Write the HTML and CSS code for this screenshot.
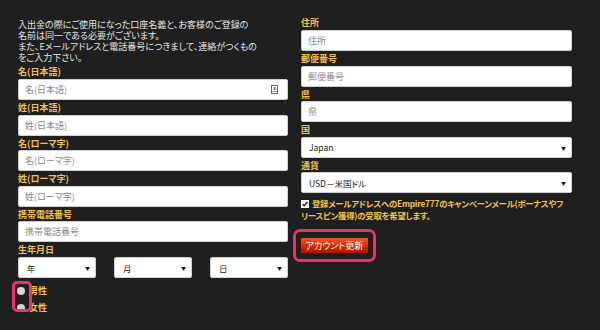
FILE: index.html
```html
<!DOCTYPE html>
<html lang="ja">
<head>
<meta charset="utf-8">
<link rel="stylesheet" href="styles.css">
</head>
<body>
<div class="page">
  <div class="col">
    <p class="intro">入出金の際にご使用になった口座名義と、お客様のご登録の<br>名前は同一である必要がございます。<br>また、Eメールアドレスと電話番号につきまして、連絡がつくもの<br>をご入力下さい。</p>
    <div class="field">
      <div class="label">名(日本語)</div>
      <div class="input">
        <span class="ph">名(日本語)</span>
        <svg class="card" width="7" height="9" viewBox="0 0 7 9"><rect x="0.5" y="0.5" width="6" height="8" fill="#fff" stroke="#666"/><rect x="2.5" y="2" width="2" height="3" fill="#777"/><line x1="1.5" y1="6.5" x2="5.5" y2="6.5" stroke="#888"/></svg>
      </div>
    </div>
    <div class="field">
      <div class="label">姓(日本語)</div>
      <div class="input"><span class="ph">姓(日本語)</span></div>
    </div>
    <div class="field">
      <div class="label">名(ローマ字)</div>
      <div class="input"><span class="ph">名(ローマ字)</span></div>
    </div>
    <div class="field">
      <div class="label">姓(ローマ字)</div>
      <div class="input"><span class="ph">姓(ローマ字)</span></div>
    </div>
    <div class="field">
      <div class="label">携帯電話番号</div>
      <div class="input"><span class="ph">携帯電話番号</span></div>
    </div>
    <div class="field">
      <div class="label">生年月日</div>
      <div class="dob">
        <div class="select small"><span>年</span><span class="arrow">▼</span></div>
        <div class="select small"><span>月</span><span class="arrow">▼</span></div>
        <div class="select small"><span>日</span><span class="arrow">▼</span></div>
      </div>
    </div>
    <div class="gender">
      <div class="radio-row"><span class="radio"></span><span class="rlabel">男性</span></div>
      <div class="radio-row"><span class="radio"></span><span class="rlabel">女性</span></div>
      <span class="mark mark-radio"></span>
    </div>
  </div>
  <div class="col right">
    <div class="field">
      <div class="label">住所</div>
      <div class="input"><span class="ph">住所</span></div>
    </div>
    <div class="field">
      <div class="label">郵便番号</div>
      <div class="input"><span class="ph">郵便番号</span></div>
    </div>
    <div class="field">
      <div class="label">県</div>
      <div class="input"><span class="ph">県</span></div>
    </div>
    <div class="field">
      <div class="label">国</div>
      <div class="select"><span>Japan</span><span class="arrow">▼</span></div>
    </div>
    <div class="field">
      <div class="label">通貨</div>
      <div class="select"><span>USD－米国ドル</span><span class="arrow">▼</span></div>
    </div>
    <p class="consent"><svg class="check" width="8" height="8" viewBox="0 0 8 8"><rect x="0" y="0" width="8" height="8" fill="#f4f4f4"/><path d="M1.6 4.2 L3.2 5.8 L6.4 2" fill="none" stroke="#222" stroke-width="1.4"/></svg>登録メールアドレスへのEmpire777のキャンペーンメール(ボーナスやフ<br>リースピン獲得)の受取を希望します。</p>
    <div class="btn-wrap">
      <button class="btn" type="button">アカウント更新</button>
      <span class="mark mark-btn"></span>
    </div>
  </div>
</div>
</body>
</html>
```

FILE: styles.css
```css
* { box-sizing: border-box; }
html, body {
  margin: 0;
  padding: 0;
  background: #1f1f1f;
  width: 600px;
  height: 330px;
  overflow: hidden;
}
body {
  font-family: "Noto Sans CJK JP", "Noto Sans", sans-serif;
  font-feature-settings: "palt";
  color: #e6e6e6;
}
.page {
  display: grid;
  grid-template-columns: 270px 271px;
  column-gap: 13px;
  padding: 15.4px 0 0 18px;
}
.col {
  display: flex;
  flex-direction: column;
}
.intro {
  margin: 3.8px 0 1.3px;
  font-size: 9px;
  line-height: 11px;
  color: #e4e4e4;
}
.label {
  height: 14.6px;
  line-height: 15px;
  font-size: 9px;
  font-weight: 700;
  color: #f0c24e;
}
.input {
  height: 21px;
  background: #fff;
  border: 1px solid #d0d0d0;
  border-radius: 2px;
  display: flex;
  align-items: center;
  justify-content: space-between;
  padding: 0 9px 0 6px;
}
.ph {
  font-size: 9px;
  color: #8a8a8a;
}
.card { display: block; }
.select {
  height: 21px;
  background: #fff;
  border: 1px solid #cfcfcf;
  border-radius: 2px;
  display: flex;
  align-items: center;
  justify-content: space-between;
  padding: 0 5px 0 7px;
  font-size: 8.5px;
  color: #222;
}
.arrow {
  font-size: 5px;
  color: #111;
}
.dob {
  display: grid;
  grid-template-columns: 78px 78px 78px;
  justify-content: space-between;
}
.select.small { padding-left: 8px; }
.gender {
  position: relative;
  margin-top: 4px;
  display: flex;
  flex-direction: column;
}
.radio-row {
  height: 17px;
  display: flex;
  align-items: center;
  gap: 4px;
}
.radio {
  width: 8px;
  height: 8px;
  border-radius: 50%;
  background: #d4d4d4;
  margin-left: -1px;
}
.rlabel {
  font-size: 9px;
  font-weight: 700;
  color: #f0c24e;
}
.mark {
  position: absolute;
  border: 3px solid #e8326c;
  border-radius: 5px;
  pointer-events: none;
}
.mark-radio {
  left: -6px;
  top: -1px;
  width: 20px;
  height: 31px;
}
.consent {
  margin: 3.5px 0 0;
  font-size: 8.4px;
  line-height: 12.5px;
  letter-spacing: -0.25px;
  font-weight: 700;
  color: #f0c24e;
}
.check {
  display: inline-block;
  vertical-align: -1px;
  margin-right: 3px;
}
.btn-wrap {
  position: relative;
  align-self: flex-start;
  margin-top: 15px;
  margin-left: -1px;
}
.btn {
  display: block;
  width: 69px;
  height: 17px;
  padding: 0;
  border: 1px solid #5a0a00;
  border-radius: 2px;
  background: linear-gradient(#f0562a, #d42a0a 55%, #a81600);
  color: #fff;
  font-family: "Noto Sans CJK JP", sans-serif;
  font-feature-settings: "palt";
  font-size: 9px;
  line-height: 15px;
}
.mark-btn {
  left: -7px;
  top: -8px;
  width: 83px;
  height: 33px;
  border-radius: 7px;
}
```
